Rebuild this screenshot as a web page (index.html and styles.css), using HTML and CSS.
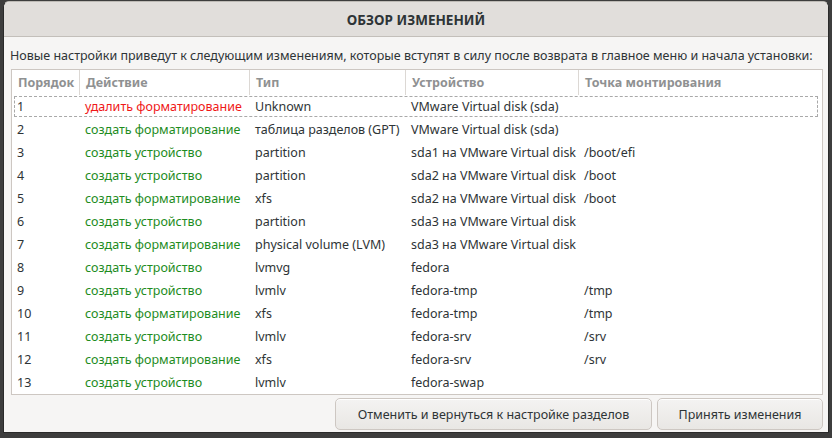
FILE: index.html
```html
<!DOCTYPE html>
<html lang="ru">
<head>
<meta charset="utf-8">
<title>Обзор изменений</title>
<link rel="stylesheet" href="styles.css">
</head>
<body>
<div class="dialog">
  <div class="titlebar">ОБЗОР ИЗМЕНЕНИЙ</div>
  <div class="content">
    <p class="desc">Новые настройки приведут к следующим изменениям, которые вступят в силу после возврата в главное меню и начала установки:</p>
    <div class="table">
      <div class="thead">
        <div class="th">Порядок</div>
        <div class="th">Действие</div>
        <div class="th">Тип</div>
        <div class="th">Устройство</div>
        <div class="th last">Точка монтирования</div>
      </div>
      <div class="row focus"><div>1</div><div class="del">удалить форматирование</div><div>Unknown</div><div>VMware Virtual disk (sda)</div><div></div></div>
      <div class="row"><div>2</div><div class="add">создать форматирование</div><div>таблица разделов (GPT)</div><div>VMware Virtual disk (sda)</div><div></div></div>
      <div class="row"><div>3</div><div class="add">создать устройство</div><div>partition</div><div>sda1 на VMware Virtual disk</div><div>/boot/efi</div></div>
      <div class="row"><div>4</div><div class="add">создать устройство</div><div>partition</div><div>sda2 на VMware Virtual disk</div><div>/boot</div></div>
      <div class="row"><div>5</div><div class="add">создать форматирование</div><div>xfs</div><div>sda2 на VMware Virtual disk</div><div>/boot</div></div>
      <div class="row"><div>6</div><div class="add">создать устройство</div><div>partition</div><div>sda3 на VMware Virtual disk</div><div></div></div>
      <div class="row"><div>7</div><div class="add">создать форматирование</div><div>physical volume (LVM)</div><div>sda3 на VMware Virtual disk</div><div></div></div>
      <div class="row"><div>8</div><div class="add">создать устройство</div><div>lvmvg</div><div>fedora</div><div></div></div>
      <div class="row"><div>9</div><div class="add">создать устройство</div><div>lvmlv</div><div>fedora-tmp</div><div>/tmp</div></div>
      <div class="row"><div>10</div><div class="add">создать форматирование</div><div>xfs</div><div>fedora-tmp</div><div>/tmp</div></div>
      <div class="row"><div>11</div><div class="add">создать устройство</div><div>lvmlv</div><div>fedora-srv</div><div>/srv</div></div>
      <div class="row"><div>12</div><div class="add">создать форматирование</div><div>xfs</div><div>fedora-srv</div><div>/srv</div></div>
      <div class="row"><div>13</div><div class="add">создать устройство</div><div>lvmlv</div><div>fedora-swap</div><div></div></div>
    </div>
    <div class="buttons">
      <button class="btn btn-cancel">Отменить и вернуться к настройке разделов</button>
      <button class="btn btn-accept">Принять изменения</button>
    </div>
  </div>
</div>
</body>
</html>
```
FILE: styles.css
```css
* { box-sizing: border-box; }
html, body { margin: 0; padding: 0; }
body {
  background: #3d3d3d;
  width: 832px;
  height: 438px;
  overflow: hidden;
  font-family: "Noto Sans", "DejaVu Sans", sans-serif;
  font-size: 12.5px;
  color: #2e3436;
}
.dialog {
  margin: 1px 0 0 3px;
  width: 826px;
  height: 432px;
  background: #f6f5f4;
  border: 1px solid #2a2a2a;
  border-top-color: #bdbab5;
  border-radius: 6px 6px 0 0;
  display: flex;
  flex-direction: column;
  overflow: hidden;
}
.titlebar {
  height: 35px;
  flex: none;
  background: #e1dedb;
  border-bottom: 1px solid #c3bfba;
  display: flex;
  align-items: center;
  justify-content: center;
  font-weight: bold;
  font-size: 13.5px;
  color: #2e3436;
  padding-top: 1px;
}
.content {
  flex: 1;
  padding: 0 5px 0 7px;
  display: flex;
  flex-direction: column;
}
.desc {
  margin: 10px 0 4px -1px;
  line-height: 18px;
  white-space: nowrap;
}
.table {
  height: 326px;
  background: #fff;
  border: 1px solid #cdc7c2;
  overflow: hidden;
}
.thead, .row {
  display: grid;
  grid-template-columns: 68px 170px 156px 173px 1fr;
}
.thead {
  height: 25px;
}
.th {
  color: #8f9192;
  font-weight: bold;
  padding: 0 6px;
  line-height: 25px;
  border-right: 1px solid #dcd8d4;
  white-space: nowrap;
}
.th.last { border-right: none; }
.row {
  height: 23px;
  line-height: 23px;
  position: relative;
}
.row > div {
  padding-left: 5px;
  white-space: nowrap;
}
.row.focus::after {
  content: "";
  position: absolute;
  left: 2px;
  right: 4px;
  top: 1px;
  bottom: 1px;
  border: 1px dashed #a9a9a9;
  pointer-events: none;
}
.del { color: #f01818; }
.add { color: #1e8c1e; }
.buttons {
  display: flex;
  justify-content: flex-end;
  gap: 5px;
  margin-top: 3px;
}
.btn {
  height: 32px;
  font-family: inherit;
  font-size: 12.5px;
  color: #2e3436;
  background: linear-gradient(#f4f3f2, #e9e7e4);
  border: 1px solid #cdc7c2;
  border-radius: 5px;
  padding: 0 12px;
  white-space: nowrap;
  box-shadow: inset 0 1px #fff;
}
.btn-cancel { width: 317px; }
.btn-accept { width: 166px; }
```
